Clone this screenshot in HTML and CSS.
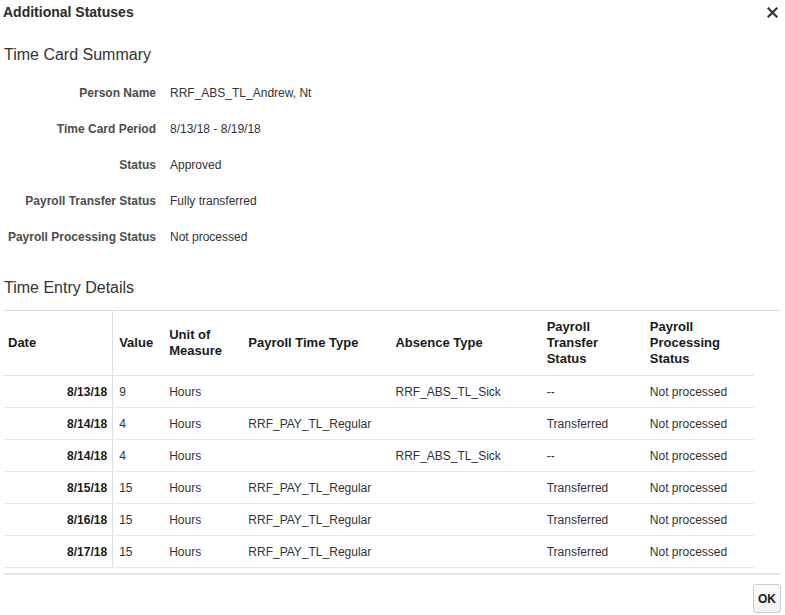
FILE: index.html
```html
<!DOCTYPE html>
<html>
<head>
<meta charset="utf-8">
<link rel="stylesheet" href="styles.css">
</head>
<body>
<div class="dialog">
  <div class="titlebar">
    <div class="title">Additional Statuses</div>
    <div class="close">
      <svg width="11" height="11" viewBox="0 0 11 11"><path d="M1.5 1.5 L9.5 9.5 M9.5 1.5 L1.5 9.5" stroke="#333" stroke-width="2.2" stroke-linecap="square"/></svg>
    </div>
  </div>
  <h2 class="section">Time Card Summary</h2>
  <div class="form">
    <div class="label">Person Name</div><div class="value">RRF_ABS_TL_Andrew, Nt</div>
    <div class="label">Time Card Period</div><div class="value">8/13/18 - 8/19/18</div>
    <div class="label">Status</div><div class="value">Approved</div>
    <div class="label">Payroll Transfer Status</div><div class="value">Fully transferred</div>
    <div class="label">Payroll Processing Status</div><div class="value">Not processed</div>
  </div>
  <h2 class="section section2">Time Entry Details</h2>
  <div class="tablewrap">
    <table class="grid">
      <thead>
        <tr>
          <th class="c-date">Date</th>
          <th class="c-val">Value</th>
          <th class="c-unit">Unit of<br>Measure</th>
          <th class="c-ptt">Payroll Time Type</th>
          <th class="c-abs">Absence Type</th>
          <th class="c-pts">Payroll<br>Transfer<br>Status</th>
          <th class="c-pps">Payroll<br>Processing<br>Status</th>
        </tr>
      </thead>
      <tbody>
        <tr><td class="c-date">8/13/18</td><td>9</td><td>Hours</td><td></td><td>RRF_ABS_TL_Sick</td><td>--</td><td>Not processed</td></tr>
        <tr><td class="c-date">8/14/18</td><td>4</td><td>Hours</td><td>RRF_PAY_TL_Regular</td><td></td><td>Transferred</td><td>Not processed</td></tr>
        <tr><td class="c-date">8/14/18</td><td>4</td><td>Hours</td><td></td><td>RRF_ABS_TL_Sick</td><td>--</td><td>Not processed</td></tr>
        <tr><td class="c-date">8/15/18</td><td>15</td><td>Hours</td><td>RRF_PAY_TL_Regular</td><td></td><td>Transferred</td><td>Not processed</td></tr>
        <tr><td class="c-date">8/16/18</td><td>15</td><td>Hours</td><td>RRF_PAY_TL_Regular</td><td></td><td>Transferred</td><td>Not processed</td></tr>
        <tr><td class="c-date">8/17/18</td><td>15</td><td>Hours</td><td>RRF_PAY_TL_Regular</td><td></td><td>Transferred</td><td>Not processed</td></tr>
      </tbody>
    </table>
  </div>
  <div class="footer">
    <button class="ok">OK</button>
  </div>
</div>
</body>
</html>
```
FILE: styles.css
```css
html, body {
  margin: 0;
  padding: 0;
  background: #fff;
}
body {
  font-family: "Liberation Sans", Arial, sans-serif;
  font-size: 12px;
  color: #333;
}
.dialog {
  width: 785px;
  height: 615px;
  box-sizing: border-box;
  padding: 0 4px 0 3px;
  display: flex;
  flex-direction: column;
}
.titlebar {
  display: flex;
  justify-content: space-between;
  align-items: center;
  height: 24px;
}
.title {
  font-weight: bold;
  font-size: 14px;
  color: #2b2b2b;
}
.close {
  width: 11px;
  height: 11px;
  margin-right: 3px;
  display: flex;
}
.section {
  margin: 0;
  font-weight: normal;
  font-size: 16px;
  color: #333;
  padding: 20px 0 0 1px;
  height: 21px;
  line-height: 21px;
}
.form {
  display: grid;
  grid-template-columns: 153px auto;
  column-gap: 14px;
  grid-auto-rows: 36px;
  align-items: center;
  margin-top: 10px;
}
.label {
  text-align: right;
  font-weight: bold;
  color: #4d4d4d;
}
.value {
  color: #333;
}
.section2 {
  padding-top: 22px;
}
.tablewrap {
  margin-top: 12px;
  border-top: 1px solid #d6dfe6;
  border-bottom: 2px solid #e1e6eb;
  height: 262px;
}
.grid {
  border-collapse: collapse;
  width: 751px;
  table-layout: fixed;
}
.grid th {
  text-align: left;
  font-weight: bold;
  font-size: 13px;
  color: #1a1a1a;
  line-height: 16px;
  height: 64px;
  padding: 0 5px 0 6px;
  vertical-align: middle;
  border-bottom: 1px solid #dfe5ea;
}
.grid td {
  height: 31px;
  padding: 0 5px 0 6px;
  border-bottom: 1px solid #e6eaee;
  color: #333;
  white-space: nowrap;
}
.grid th + th, .grid td + td {
  border-left: 1px solid #fff;
}
.grid .c-date {
  width: 99px;
  border-right: 1px solid #d6dfe6;
  padding-left: 5px;
  padding-right: 5px;
}
.grid td.c-date {
  text-align: right;
  font-weight: bold;
  color: #1a1a1a;
}
.grid .c-val { width: 38px; }
.grid .c-unit { width: 67px; }
.grid .c-ptt { width: 135px; }
.grid .c-abs { width: 139px; }
.grid .c-pts { width: 91px; }
.grid .c-pps { width: 99px; }
.footer {
  display: flex;
  justify-content: flex-end;
  padding-top: 9px;
}
.ok {
  width: 28px;
  height: 29px;
  padding: 0;
  font-family: "Liberation Sans", Arial, sans-serif;
  font-weight: bold;
  font-size: 12px;
  color: #1a1a1a;
  border: 1px solid #c4ced7;
  border-radius: 3px;
  background: linear-gradient(#fafbfc, #eef1f4);
}
```
